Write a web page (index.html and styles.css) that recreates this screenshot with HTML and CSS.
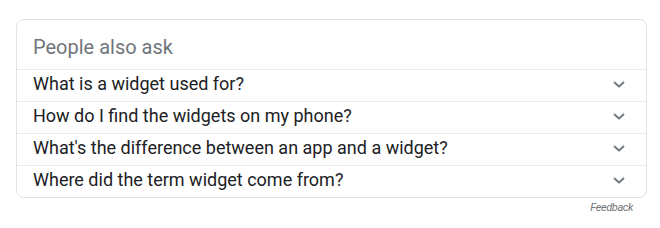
FILE: index.html
```html
<!DOCTYPE html>
<html>
<head>
<meta charset="utf-8">
<link rel="stylesheet" href="styles.css">
</head>
<body>
<div class="wrap">
  <div class="card">
    <div class="head">People also ask</div>
    <div class="row"><span class="q">What is a widget used for?</span><svg class="chev" viewBox="0 0 12 7"><polyline points="1,1 6,5.5 11,1"/></svg></div>
    <div class="row"><span class="q">How do I find the widgets on my phone?</span><svg class="chev" viewBox="0 0 12 7"><polyline points="1,1 6,5.5 11,1"/></svg></div>
    <div class="row"><span class="q">What's the difference between an app and a widget?</span><svg class="chev" viewBox="0 0 12 7"><polyline points="1,1 6,5.5 11,1"/></svg></div>
    <div class="row"><span class="q">Where did the term widget come from?</span><svg class="chev" viewBox="0 0 12 7"><polyline points="1,1 6,5.5 11,1"/></svg></div>
  </div>
  <div class="feedback">Feedback</div>
</div>
</body>
</html>
```
FILE: styles.css
```css
html, body { margin: 0; padding: 0; background: #fff; }
body { font-family: Roboto, Arial, sans-serif; }
.wrap { padding: 19px 13px 0 16px; width: 631px; }
.card {
  border: 1px solid #dfe1e5;
  border-radius: 8px;
  overflow: hidden;
}
.head {
  height: 50px;
  box-sizing: border-box;
  padding: 15px 16px 0 16px;
  font-size: 20px;
  line-height: 24px;
  color: #70757a;
  border-bottom: 1px solid #ebebeb;
}
.row {
  display: flex;
  align-items: flex-start;
  justify-content: space-between;
  height: 31px;
  padding: 0 21px 0 16px;
  border-bottom: 1px solid #ebebeb;
  font-size: 18px;
  color: #202124;
}
.row:last-child { border-bottom: none; }
.q { line-height: 20px; padding-top: 4px; }
.chev {
  width: 12px;
  height: 7px;
  margin-top: 11px;
  fill: none;
  stroke: #70757a;
  stroke-width: 1.8;
}
.feedback {
  text-align: right;
  font-size: 11px;
  font-style: italic;
  letter-spacing: -0.4px;
  color: #70757a;
  padding: 3px 14px 0 0;
  line-height: 13px;
}
```
